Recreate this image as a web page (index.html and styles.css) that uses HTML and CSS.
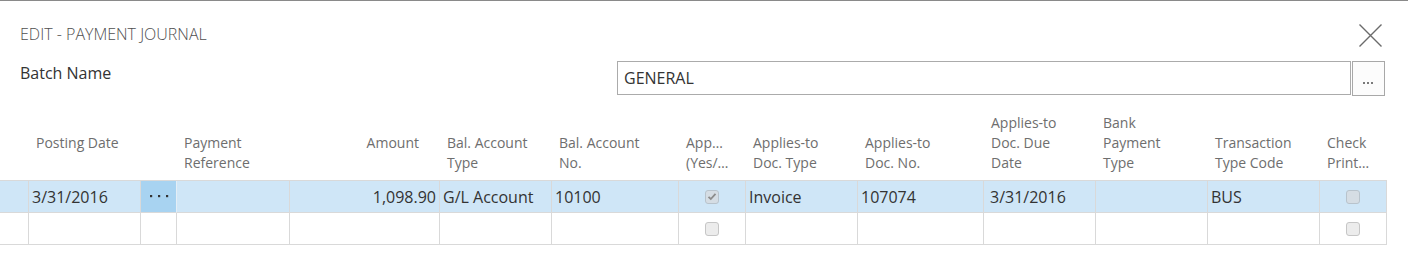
FILE: index.html
```html
<!DOCTYPE html>
<html lang="en">
<head>
<meta charset="utf-8">
<title>Edit - Payment Journal</title>
<link rel="stylesheet" href="styles.css">
</head>
<body>
<div class="dialog">
  <div class="title-row">
    <h1 class="title">EDIT - PAYMENT JOURNAL</h1>
    <button class="close" aria-label="Close">
      <svg width="23" height="23" viewBox="0 0 23 23"><path d="M0.5 0.5 L22.5 22.5 M22.5 0.5 L0.5 22.5" stroke="#6b6b6b" stroke-width="1.4" fill="none"/></svg>
    </button>
  </div>

  <div class="batch-row">
    <div class="batch-label">Batch Name</div>
    <div class="batch-field">
      <div class="batch-input">GENERAL</div>
      <button class="lookup" aria-label="Lookup">
        <svg width="11" height="3" viewBox="0 0 11 3"><rect x="0" y="0" width="2" height="2" fill="#7a7a7a"/><rect x="4" y="0" width="2" height="2" fill="#7a7a7a"/><rect x="8" y="0" width="2" height="2" fill="#7a7a7a"/></svg>
      </button>
    </div>
  </div>

  <div class="journal">
    <div class="grid head">
      <div class="hc"></div>
      <div class="hc"><div class="hl">Posting Date</div></div>
      <div class="hc"></div>
      <div class="hc"><div class="hl">Payment<br>Reference</div></div>
      <div class="hc right"><div class="hl">Amount</div></div>
      <div class="hc"><div class="hl">Bal. Account<br>Type</div></div>
      <div class="hc"><div class="hl">Bal. Account<br>No.</div></div>
      <div class="hc"><div class="hl">App…<br>(Yes/…</div></div>
      <div class="hc"><div class="hl">Applies-to<br>Doc. Type</div></div>
      <div class="hc"><div class="hl">Applies-to<br>Doc. No.</div></div>
      <div class="hc"><div class="hl">Applies-to<br>Doc. Due<br>Date</div></div>
      <div class="hc"><div class="hl">Bank<br>Payment<br>Type</div></div>
      <div class="hc"><div class="hl">Transaction<br>Type Code</div></div>
      <div class="hc"><div class="hl">Check<br>Print…</div></div>
    </div>

    <div class="rows">
      <div class="grid row selected">
        <div class="c ind"></div>
        <div class="c">3/31/2016</div>
        <div class="c dots"><svg width="20" height="3" viewBox="0 0 20 3"><rect x="1" y="0" width="2.2" height="2.2" fill="#333"/><rect x="9" y="0" width="2.2" height="2.2" fill="#333"/><rect x="17" y="0" width="2.2" height="2.2" fill="#333"/></svg></div>
        <div class="c after-dots"></div>
        <div class="c num">1,098.90</div>
        <div class="c">G/L Account</div>
        <div class="c">10100</div>
        <div class="c center"><span class="cb checked"><svg width="10" height="9" viewBox="0 0 10 9"><path d="M1.5 4.8 L3.8 7 L8.5 1.8" stroke="#8c8c8c" stroke-width="1.8" fill="none"/></svg></span></div>
        <div class="c">Invoice</div>
        <div class="c">107074</div>
        <div class="c date">3/31/2016</div>
        <div class="c"></div>
        <div class="c">BUS</div>
        <div class="c center last"><span class="cb"></span></div>
      </div>
      <div class="grid row">
        <div class="c ind"></div>
        <div class="c"></div>
        <div class="c"></div>
        <div class="c"></div>
        <div class="c num"></div>
        <div class="c"></div>
        <div class="c"></div>
        <div class="c center"><span class="cb"></span></div>
        <div class="c"></div>
        <div class="c"></div>
        <div class="c date"></div>
        <div class="c"></div>
        <div class="c"></div>
        <div class="c center last"><span class="cb"></span></div>
      </div>
    </div>
  </div>
</div>
</body>
</html>
```

FILE: styles.css
```css
* { box-sizing: border-box; }

html, body {
  margin: 0;
  padding: 0;
  background: #ffffff;
}

body {
  font-family: "Open Sans", "Noto Sans", "Liberation Sans", sans-serif;
  color: #333333;
  width: 1408px;
  height: 273px;
  overflow: hidden;
}

.dialog {
  border-top: 1px solid #8a8a8a;
}

.title-row {
  display: flex;
  justify-content: space-between;
  align-items: flex-start;
  padding: 23px 26px 0 20px;
}

.title {
  margin: 0;
  font-size: 16px;
  font-weight: 300;
  line-height: 20px;
  color: #505050;
}

.close {
  display: block;
  width: 23px;
  height: 23px;
  padding: 0;
  border: 0;
  background: transparent;
}

.close svg { display: block; }

.batch-row {
  display: flex;
  align-items: flex-start;
  margin-top: 14px;
  padding-left: 20px;
}

.batch-label {
  flex: 0 0 597px;
  margin-top: 2px;
  font-size: 16px;
  line-height: 20px;
  color: #333333;
}

.batch-field {
  display: flex;
  gap: 1px;
}

.batch-input {
  width: 734px;
  height: 34px;
  border: 1px solid #ababab;
  padding: 6px 6px 0 6px;
  font-size: 16px;
  line-height: 20px;
  color: #333333;
  background: #ffffff;
}

.lookup {
  width: 33px;
  height: 35px;
  border: 1px solid #a8a8a8;
  background: #fcfcfc;
  padding: 0;
  display: flex;
  align-items: flex-end;
  justify-content: center;
  padding-bottom: 10px;
}

.lookup svg { display: block; }

.journal {
  margin-top: 17px;
}

.grid {
  display: grid;
  grid-template-columns: 28px 112px 36px 113px 150px 112px 127px 67px 112px 126px 112px 112px 112px 68px;
  width: 1387px;
}

.head {
  align-items: end;
}

.hc {
  padding: 0 4px 7px 8px;
  font-size: 14px;
  line-height: 20px;
  color: #6e6e6e;
  white-space: nowrap;
}

.hl { min-height: 40px; }

.hc.right {
  text-align: right;
  padding-right: 20px;
}

.rows {
  border-top: 1px solid #d9d9d9;
  width: 1387px;
}

.row .c {
  height: 32px;
  border-left: 1px solid #d9d9d9;
  border-bottom: 1px solid #d9d9d9;
  padding: 2px 3px 0 3px;
  font-size: 16px;
  line-height: 29px;
  color: #333333;
  white-space: nowrap;
  overflow: hidden;
}

.row .c.ind { border-left: 0; }

.row .c.last { border-right: 1px solid #d9d9d9; }

.row .c.num { text-align: right; }

.row .c.date { padding-left: 6px; }

.row .c.center {
  display: flex;
  align-items: center;
  justify-content: center;
  padding: 0;
}

.row.selected { background: #cfe6f7; }

.row.selected .c.dots {
  background: #a8d3f1;
  display: flex;
  align-items: center;
  justify-content: center;
  padding: 0 0 0 1px;
}

.row.selected .c.dots svg { display: block; }

.row.selected .c.after-dots { border-left-color: #e4eef6; }

.cb {
  display: flex;
  align-items: center;
  justify-content: center;
  width: 14px;
  height: 14px;
  border: 1px solid #c6c6c6;
  border-radius: 3px;
  background: #ececec;
}

.row.selected .cb {
  background: #d5dde4;
  border-color: #b8c3cc;
}

.cb svg { display: block; }
```
